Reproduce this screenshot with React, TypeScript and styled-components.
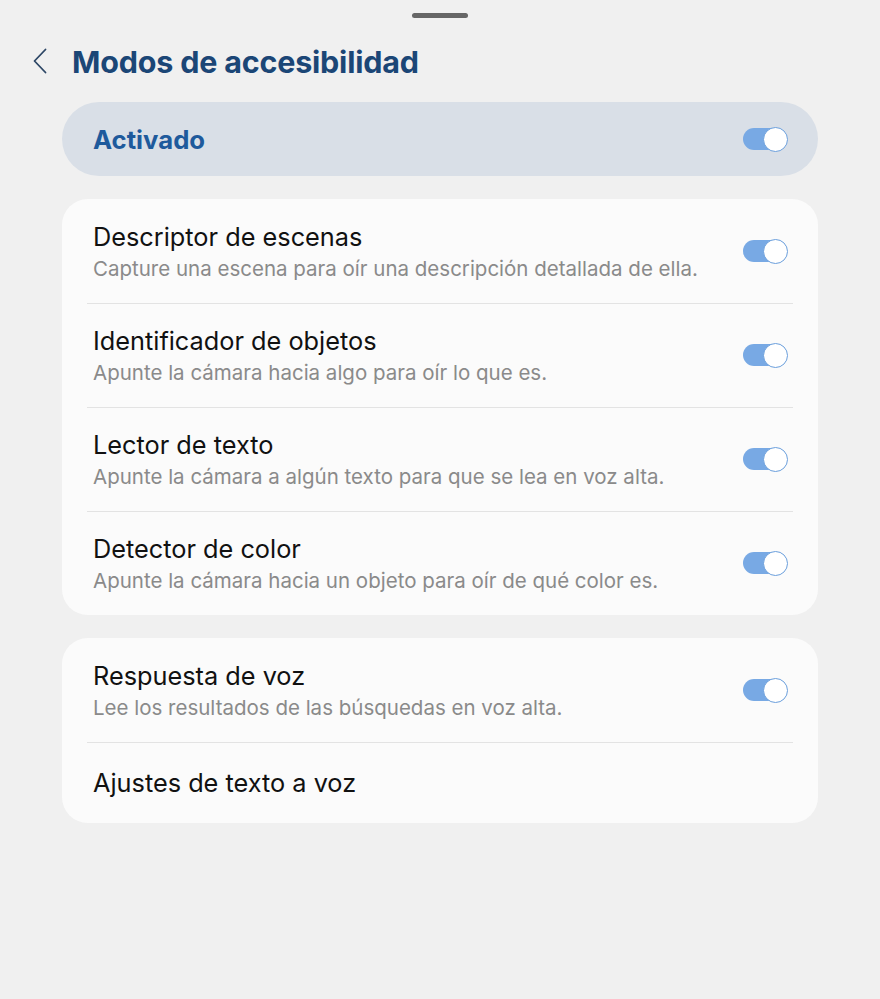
import React from "react";
import styled, { createGlobalStyle } from "styled-components";

const Global = createGlobalStyle`
  html, body { margin: 0; padding: 0; background: #f0f0f0; }
  body { font-family: "Inter", "Roboto", sans-serif; -webkit-font-smoothing: antialiased; }
`;

const Page = styled.div`
  width: 880px;
  height: 999px;
  background: #f0f0f0;
  display: flex;
  flex-direction: column;
  align-items: center;
  box-sizing: border-box;
  padding-top: 13px;
`;

const Handle = styled.div`
  width: 56px;
  height: 5px;
  border-radius: 3px;
  background: #666666;
`;

const Header = styled.div`
  align-self: stretch;
  display: flex;
  align-items: center;
  gap: 19px;
  padding: 23px 0 0 27px;
  height: 40px;
`;

const Back = styled.button`
  border: 0;
  background: none;
  padding: 0;
  width: 26px;
  height: 32px;
  display: flex;
  align-items: center;
  justify-content: center;
`;

const Title = styled.h1`
  margin: 0;
  font-size: 30.5px;
  font-weight: 700;
  color: #1b4676;
  letter-spacing: -0.2px;
`;

const Content = styled.div`
  width: 756px;
  display: flex;
  flex-direction: column;
  gap: 23px;
  margin-top: 21px;
`;

const MasterCard = styled.div`
  height: 74px;
  border-radius: 37px;
  background: #d9dfe7;
  display: flex;
  align-items: center;
  justify-content: space-between;
  padding: 0 31px;
`;

const MasterLabel = styled.span`
  font-size: 25.7px;
  font-weight: 700;
  color: #1e5a9c;
`;

const Card = styled.div`
  background: #fbfbfb;
  border-radius: 26px;
  display: flex;
  flex-direction: column;
`;

const Row = styled.div<{ $tall?: boolean }>`
  height: ${(p) => (p.$tall ? "104px" : "81px")};
  display: flex;
  align-items: center;
  justify-content: space-between;
  padding: 0 31px;
  position: relative;
  &:not(:first-child)::before {
    content: "";
    position: absolute;
    top: 0;
    left: 25px;
    right: 25px;
    height: 1px;
    background: #e3e3e3;
  }
`;

const Texts = styled.div`
  display: flex;
  flex-direction: column;
  gap: 4px;
`;

const RowTitle = styled.span`
  font-size: 25.3px;
  line-height: 31px;
  color: #111111;
`;

const RowSub = styled.span`
  font-size: 20.5px;
  line-height: 25px;
  color: #8a8a8a;
`;

const Track = styled.div`
  width: 44px;
  height: 22px;
  border-radius: 11px;
  background: #78a9e4;
  position: relative;
  flex-shrink: 0;
`;

const Knob = styled.div`
  position: absolute;
  right: -1px;
  top: -1.5px;
  width: 25px;
  height: 25px;
  border-radius: 50%;
  background: #ffffff;
  border: 1.5px solid #6b9fdc;
  box-sizing: border-box;
`;

const Toggle = () => (
  <Track>
    <Knob />
  </Track>
);

const items1 = [
  ["Descriptor de escenas", "Capture una escena para oír una descripción detallada de ella."],
  ["Identificador de objetos", "Apunte la cámara hacia algo para oír lo que es."],
  ["Lector de texto", "Apunte la cámara a algún texto para que se lea en voz alta."],
  ["Detector de color", "Apunte la cámara hacia un objeto para oír de qué color es."],
];

export default function App() {
  return (
    <Page>
      <Global />
      <Handle />
      <Header>
        <Back aria-label="Atrás">
          <svg width="14" height="26" viewBox="0 0 14 26" fill="none">
            <path d="M12.5 1.5 L1.5 13 L12.5 24.5" stroke="#2c4665" strokeWidth="1.8" strokeLinecap="round" strokeLinejoin="round" />
          </svg>
        </Back>
        <Title>Modos de accesibilidad</Title>
      </Header>
      <Content>
        <MasterCard>
          <MasterLabel>Activado</MasterLabel>
          <Toggle />
        </MasterCard>
        <Card>
          {items1.map(([t, s]) => (
            <Row $tall key={t}>
              <Texts>
                <RowTitle>{t}</RowTitle>
                <RowSub>{s}</RowSub>
              </Texts>
              <Toggle />
            </Row>
          ))}
        </Card>
        <Card>
          <Row $tall>
            <Texts>
              <RowTitle>Respuesta de voz</RowTitle>
              <RowSub>Lee los resultados de las búsquedas en voz alta.</RowSub>
            </Texts>
            <Toggle />
          </Row>
          <Row>
            <Texts>
              <RowTitle>Ajustes de texto a voz</RowTitle>
            </Texts>
          </Row>
        </Card>
      </Content>
    </Page>
  );
}
